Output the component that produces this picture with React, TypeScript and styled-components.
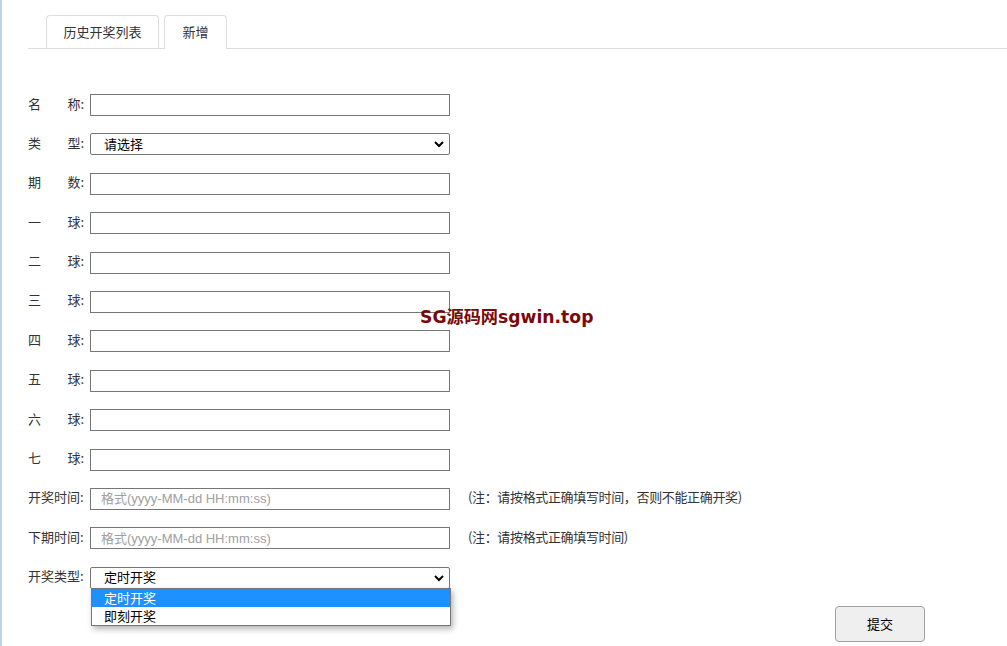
import React from 'react';
import styled, { createGlobalStyle } from 'styled-components';

const GlobalStyle = createGlobalStyle`
	html, body {
		margin: 0;
		padding: 0;
		background: #fff;
	}
	body {
		font-family: 'Noto Sans CJK SC', 'Liberation Sans', sans-serif;
		font-size: 13px;
		color: #333;
	}
`;

const Page = styled.div`
	position: relative;
	min-height: 646px;
	border-left: 2px solid #b9d4e2;
	box-sizing: border-box;
	padding-left: 26px;
`;

const TabBar = styled.div`
	display: flex;
	gap: 5px;
	padding: 15px 0 0 18px;
	border-bottom: 1px solid #dddddd;
`;

const Tab = styled.div<{ $active?: boolean; $width: number }>`
	width: ${(p) => p.$width}px;
	box-sizing: border-box;
	display: flex;
	align-items: center;
	justify-content: center;
	padding-bottom: 2px;
	border: 1px solid #dddddd;
	border-bottom: none;
	border-radius: 4px 4px 0 0;
	background: #fff;
	color: #333;
	margin-bottom: ${(p) => (p.$active ? '-1px' : '0')};
	height: ${(p) => (p.$active ? '34px' : '33px')};
`;

const Form = styled.div`
	display: flex;
	flex-direction: column;
	gap: 17.4px;
	padding-top: 45px;
`;

const Row = styled.div`
	position: relative;
	display: flex;
	align-items: center;
	height: 22px;
`;

const Label = styled.label`
	width: 56px;
	display: flex;
	justify-content: space-between;
	margin: 0 6px 4px 0;
	color: #333;
	white-space: nowrap;
`;

const Input = styled.input`
	width: 360px;
	height: 22px;
	box-sizing: border-box;
	border: 1px solid #767676;
	border-radius: 0;
	padding: 0 10px;
	font-family: 'Liberation Sans', 'Noto Sans CJK SC', sans-serif;
	font-size: 13px;
	outline: none;
	&::placeholder {
		color: #a0a0a0;
	}
`;

const SelectBox = styled.div`
	width: 360px;
	height: 22px;
	box-sizing: border-box;
	border: 1px solid #767676;
	border-radius: 2px;
	display: flex;
	align-items: center;
	justify-content: space-between;
	padding: 0 5px 0 13px;
	color: #000;
	background: #fff;
`;

const SelectText = styled.span`
	padding-bottom: 2px;
`;

const Note = styled.span`
	margin: 0 0 4px 18px;
	letter-spacing: -0.35px;
	color: #333;
`;

const Popup = styled.div`
	position: absolute;
	left: 63px;
	top: 21px;
	width: 360px;
	box-sizing: border-box;
	border: 1px solid #767676;
	background: #fff;
	box-shadow: 2px 3px 6px rgba(0, 0, 0, 0.3);
	z-index: 2;
`;

const Option = styled.div<{ $selected?: boolean }>`
	height: 18px;
	line-height: 17px;
	padding-left: 12px;
	color: ${(p) => (p.$selected ? '#fff' : '#000')};
	background: ${(p) => (p.$selected ? '#1e90ff' : '#fff')};
`;

const ButtonRow = styled.div`
	display: flex;
	padding-left: 807px;
`;

const SubmitButton = styled.button`
	width: 90px;
	height: 36px;
	padding-bottom: 2px;
	background: #efefef;
	border: 1px solid #a0a0a0;
	border-radius: 4px;
	font-family: 'Noto Sans CJK SC', sans-serif;
	font-size: 13px;
	color: #000;
`;

const Watermark = styled.div`
	position: absolute;
	left: 418px;
	top: 303px;
	font-family: 'DejaVu Sans', 'Noto Sans CJK SC', sans-serif;
	font-weight: 700;
	font-size: 17.2px;
	color: #7a0808;
	z-index: 3;
`;

function Chevron() {
	return (
		<svg width="10" height="8" viewBox="0 0 10 8" fill="none">
			<path d="M1 2L5 6L9 2" stroke="#000" strokeWidth="2" />
		</svg>
	);
}

type FieldLabel = [string, string];

const balls: FieldLabel[] = [
	['一', '球:'],
	['二', '球:'],
	['三', '球:'],
	['四', '球:'],
	['五', '球:'],
	['六', '球:'],
	['七', '球:'],
];

function App() {
	return (
		<Page>
			<GlobalStyle />
			<TabBar>
				<Tab $width={113}>历史开奖列表</Tab>
				<Tab $width={63} $active>
					新增
				</Tab>
			</TabBar>
			<Form>
				<Row>
					<Label>
						<span>名</span>
						<span>称:</span>
					</Label>
					<Input />
				</Row>
				<Row>
					<Label>
						<span>类</span>
						<span>型:</span>
					</Label>
					<SelectBox>
						<SelectText>请选择</SelectText>
						<Chevron />
					</SelectBox>
				</Row>
				<Row>
					<Label>
						<span>期</span>
						<span>数:</span>
					</Label>
					<Input />
				</Row>
				{balls.map(([a, b]) => (
					<Row key={a}>
						<Label>
							<span>{a}</span>
							<span>{b}</span>
						</Label>
						<Input />
					</Row>
				))}
				<Row>
					<Label>开奖时间:</Label>
					<Input placeholder="格式(yyyy-MM-dd HH:mm:ss)" />
					<Note>(注：请按格式正确填写时间，否则不能正确开奖)</Note>
				</Row>
				<Row>
					<Label>下期时间:</Label>
					<Input placeholder="格式(yyyy-MM-dd HH:mm:ss)" />
					<Note>(注：请按格式正确填写时间)</Note>
				</Row>
				<Row>
					<Label>开奖类型:</Label>
					<SelectBox>
						<SelectText>定时开奖</SelectText>
						<Chevron />
					</SelectBox>
					<Popup>
						<Option $selected>定时开奖</Option>
						<Option>即刻开奖</Option>
					</Popup>
				</Row>
				<ButtonRow>
					<SubmitButton>提交</SubmitButton>
				</ButtonRow>
			</Form>
			<Watermark>SG源码网sgwin.top</Watermark>
		</Page>
	);
}

export default App;
